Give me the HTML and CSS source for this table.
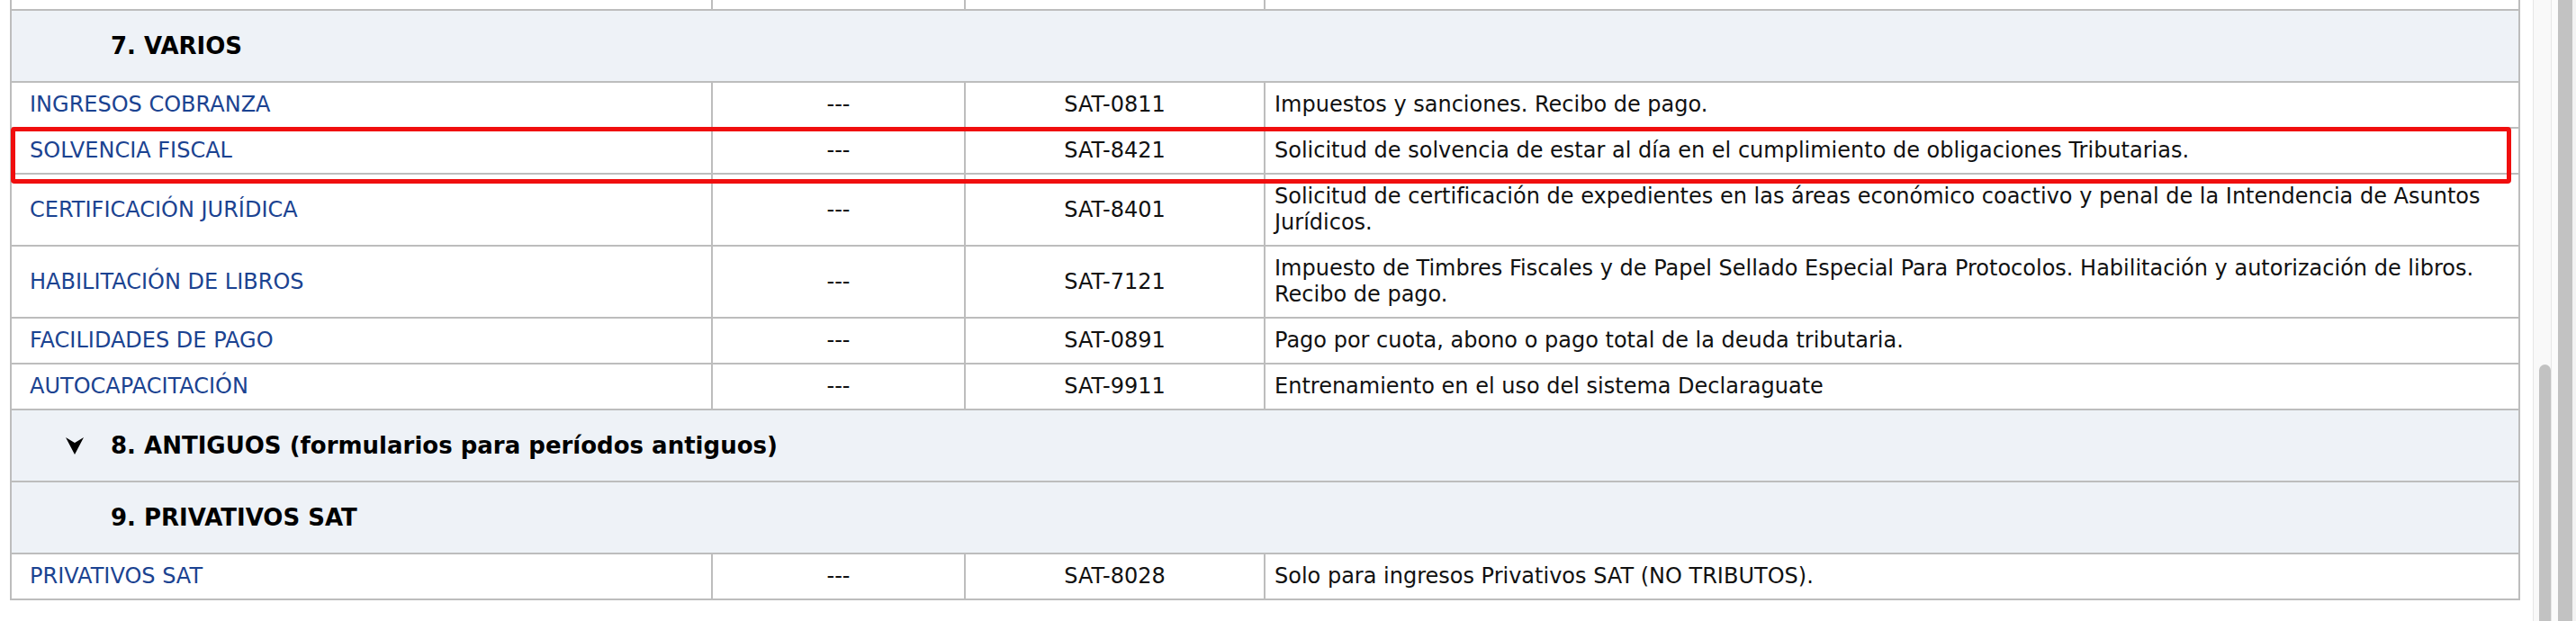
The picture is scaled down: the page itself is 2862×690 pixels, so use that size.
FILE: index.html
```html
<!DOCTYPE html>
<html lang="es">
<head>
<meta charset="utf-8">
<title>Formularios SAT</title>
<link rel="stylesheet" href="styles.css">
</head>
<body>
<div class="page">
  <div class="content">
    <table class="forms">
      <colgroup>
        <col class="c-name">
        <col class="c-ver">
        <col class="c-code">
        <col class="c-desc">
      </colgroup>
      <tbody>
        <tr class="row">
          <td class="name">&nbsp;</td><td class="center">&nbsp;</td><td class="center">&nbsp;</td><td class="desc">&nbsp;</td>
        </tr>
        <tr class="group">
          <td colspan="4"><span class="marker"></span><span class="group-title">7. VARIOS</span></td>
        </tr>
        <tr class="row">
          <td class="name"><a href="#">INGRESOS COBRANZA</a></td>
          <td class="center">---</td>
          <td class="center">SAT-0811</td>
          <td class="desc">Impuestos y sanciones. Recibo de pago.</td>
        </tr>
        <tr class="row">
          <td class="name"><a href="#">SOLVENCIA FISCAL</a></td>
          <td class="center">---</td>
          <td class="center">SAT-8421</td>
          <td class="desc">Solicitud de solvencia de estar al día en el cumplimiento de obligaciones Tributarias.</td>
        </tr>
        <tr class="row">
          <td class="name"><a href="#">CERTIFICACIÓN JURÍDICA</a></td>
          <td class="center">---</td>
          <td class="center">SAT-8401</td>
          <td class="desc">Solicitud de certificación de expedientes en las áreas económico coactivo y penal de la Intendencia de Asuntos Jurídicos.</td>
        </tr>
        <tr class="row">
          <td class="name"><a href="#">HABILITACIÓN DE LIBROS</a></td>
          <td class="center">---</td>
          <td class="center">SAT-7121</td>
          <td class="desc">Impuesto de Timbres Fiscales y de Papel Sellado Especial Para Protocolos. Habilitación y autorización de libros. Recibo de pago.</td>
        </tr>
        <tr class="row">
          <td class="name"><a href="#">FACILIDADES DE PAGO</a></td>
          <td class="center">---</td>
          <td class="center">SAT-0891</td>
          <td class="desc">Pago por cuota, abono o pago total de la deuda tributaria.</td>
        </tr>
        <tr class="row">
          <td class="name"><a href="#">AUTOCAPACITACIÓN</a></td>
          <td class="center">---</td>
          <td class="center">SAT-9911</td>
          <td class="desc">Entrenamiento en el uso del sistema Declaraguate</td>
        </tr>
        <tr class="group">
          <td colspan="4"><span class="marker"><svg class="arrow" width="20" height="19" viewBox="0 0 20 19"><path d="M0 0 L10 6 L20 0 L10 19 Z" fill="#000"/></svg></span><span class="group-title">8. ANTIGUOS (formularios para períodos antiguos)</span></td>
        </tr>
        <tr class="group">
          <td colspan="4"><span class="marker"></span><span class="group-title">9. PRIVATIVOS SAT</span></td>
        </tr>
        <tr class="row">
          <td class="name"><a href="#">PRIVATIVOS SAT</a></td>
          <td class="center">---</td>
          <td class="center">SAT-8028</td>
          <td class="desc">Solo para ingresos Privativos SAT (NO TRIBUTOS).</td>
        </tr>
      </tbody>
    </table>
    <div class="highlight"></div>
  </div>
  <div class="scrollbar">
    <div class="track"><div class="thumb"></div></div>
    <div class="gap"></div>
    <div class="rail"></div>
    <div class="edge"></div>
  </div>
</div>
</body>
</html>
```
FILE: styles.css
```css
html, body {
  margin: 0;
  padding: 0;
  background: #ffffff;
}

body {
  font-family: "DejaVu Sans", Verdana, sans-serif;
  font-size: 24px;
  color: #111111;
}

.page {
  display: flex;
  height: 690px;
  overflow: hidden;
}

.content {
  position: relative;
  flex: none;
  width: 2814px;
  box-sizing: border-box;
  padding-left: 11px;
  overflow: hidden;
}

.forms {
  border-collapse: collapse;
  table-layout: fixed;
  width: 2787px;
  margin-top: -41px;
}

.c-name { width: 779px; }
.c-ver { width: 281px; }
.c-code { width: 333px; }
.c-desc { width: 1394px; }

.forms td {
  border: 2px solid #bdbdbd;
  line-height: 29px;
  padding: 10px 10px;
  vertical-align: middle;
}

.forms td.name {
  padding-left: 20px;
}

.forms td.center {
  text-align: center;
}

.forms td.desc {
  padding-left: 10px;
  padding-right: 10px;
}

.forms a {
  color: #1b4391;
  text-decoration: none;
}

.group td {
  background: #eef2f7;
  padding: 23px 0 24px 60px;
  line-height: 30px;
  height: 30px;
}

.marker {
  display: inline-block;
  width: 50px;
  height: 19px;
  vertical-align: middle;
  line-height: 0;
}

.arrow {
  display: block;
}

.group-title {
  font-weight: bold;
  font-size: 26px;
  color: #000000;
  vertical-align: middle;
}

.highlight {
  position: absolute;
  left: 12px;
  top: 141px;
  width: 2778px;
  height: 63px;
  box-sizing: border-box;
  border: 5px solid #f00e0e;
  border-radius: 4px;
}

.scrollbar {
  flex: 1;
  display: flex;
  height: 690px;
}

.track {
  width: 21px;
  box-sizing: border-box;
  background: #f9f9f9;
  border-left: 1px solid #e6e6e6;
  border-right: 1px solid #e6e6e6;
  padding-top: 405px;
  padding-left: 6px;
}

.thumb {
  width: 13px;
  height: 285px;
  background: #c2c2c2;
  border-radius: 7px 7px 0 0;
}

.gap {
  width: 7px;
  background: #fbfbfb;
}

.rail {
  width: 16px;
  background: #c2c2c2;
}

.edge {
  flex: 1;
  background: #f3f3f3;
}
```
